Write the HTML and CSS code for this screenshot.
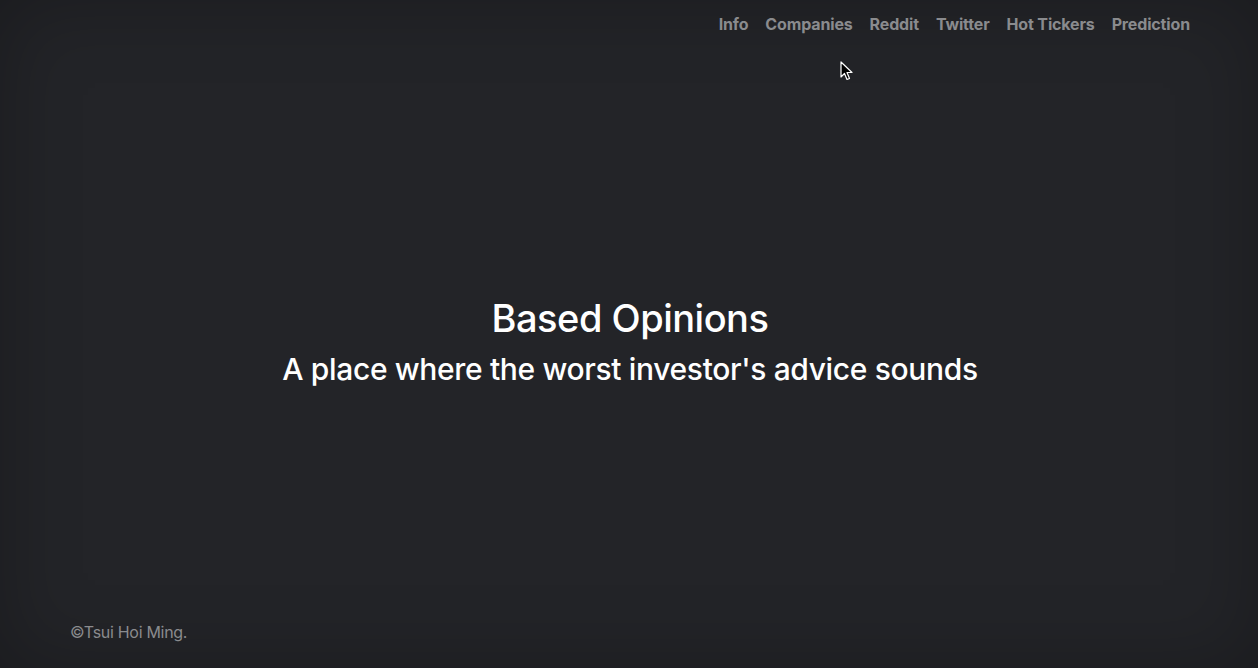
FILE: index.html
```html
<!DOCTYPE html>
<html lang="en">
<head>
<meta charset="utf-8">
<title>Based Opinions</title>
<link rel="stylesheet" href="styles.css">
</head>
<body>
<div class="cover">
  <header class="masthead">
    <nav class="nav">
      <a class="nav-link" href="#">Info</a>
      <a class="nav-link" href="#">Companies</a>
      <a class="nav-link" href="#">Reddit</a>
      <a class="nav-link" href="#">Twitter</a>
      <a class="nav-link" href="#">Hot Tickers</a>
      <a class="nav-link" href="#">Prediction</a>
    </nav>
  </header>
  <main class="hero">
    <h1 class="title">Based Opinions</h1>
    <h2 class="subtitle">A place where the worst investor's advice sounds</h2>
  </main>
  <footer class="footer">©Tsui Hoi Ming.</footer>
</div>
<svg class="cursor" width="14" height="20" viewBox="0 0 14 20">
  <path d="M1 1 L1 16 L4.5 12.5 L7 18.5 L9.5 17.5 L7 11.5 L12 11.5 Z" fill="#000" stroke="#fff" stroke-width="1.2" stroke-linejoin="round"/>
</svg>
</body>
</html>
```
FILE: styles.css
```css
html, body {
  margin: 0;
  height: 100%;
}
body {
  background: #232428;
  color: #fff;
  font-family: Inter, "Noto Sans", sans-serif;
  box-shadow: inset 0 0 5rem rgba(0, 0, 0, 0.25);
  overflow: hidden;
}
.cover {
  height: 100%;
  display: flex;
  flex-direction: column;
  padding: 0 68px 0 70px;
  box-sizing: border-box;
}
.masthead {
  display: flex;
  justify-content: flex-end;
  padding-top: 13px;
}
.nav {
  display: flex;
  gap: 17px;
}
.nav-link {
  color: #8a8b8e;
  font-weight: 700;
  font-size: 16px;
  line-height: 22px;
  text-decoration: none;
  letter-spacing: -0.15px;
}
.hero {
  flex: 1;
  display: flex;
  flex-direction: column;
  align-items: center;
  justify-content: center;
  text-align: center;
  padding-top: 26px;
}
.title {
  margin: 0;
  font-size: 38px;
  font-weight: 500;
  line-height: 46px;
  letter-spacing: -0.5px;
}
.subtitle {
  margin: 10px 0 0;
  font-size: 30px;
  font-weight: 500;
  line-height: 36px;
  letter-spacing: -0.35px;
}
.footer {
  color: #8a8b8e;
  font-size: 16px;
  line-height: 22px;
  letter-spacing: -0.3px;
  padding-bottom: 25px;
}
.cursor {
  position: absolute;
  left: 840px;
  top: 61px;
}
```
